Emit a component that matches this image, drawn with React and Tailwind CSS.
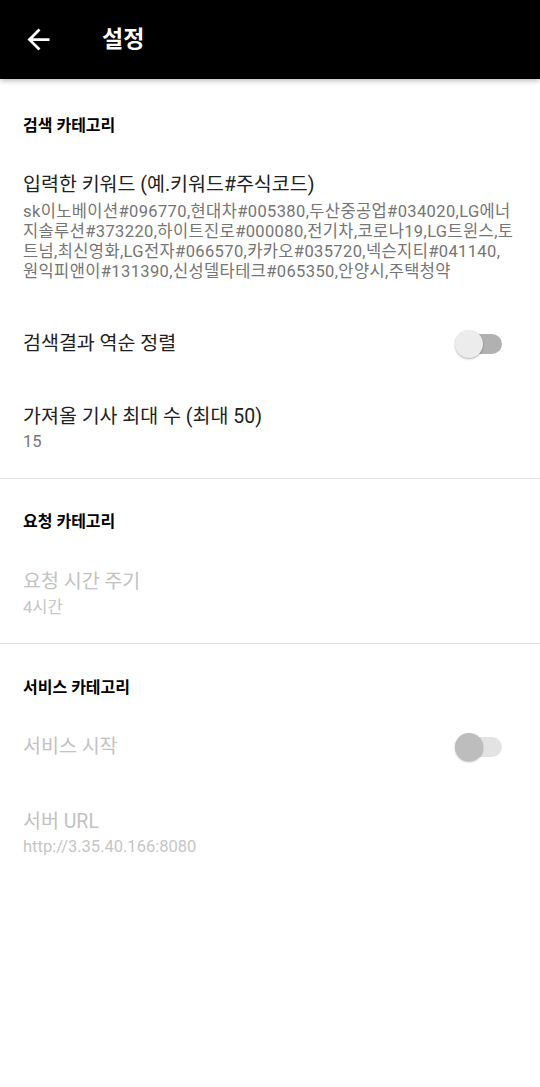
import React, { useState } from "react";

const FONT = "font-['Roboto','Noto_Sans_CJK_KR',sans-serif]";

const keywordLines = [
  "sk이노베이션#096770,현대차#005380,두산중공업#034020,LG에너",
  "지솔루션#373220,하이트진로#000080,전기차,코로나19,LG트윈스,토",
  "트넘,최신영화,LG전자#066570,카카오#035720,넥슨지티#041140,",
  "원익피앤이#131390,신성델타테크#065350,안양시,주택청약",
];

function Toggle({ checked, disabled, onChange }) {
  return (
    <button
      type="button"
      onClick={() => !disabled && onChange(!checked)}
      className="relative w-[47px] h-[30px] shrink-0"
    >
      <span
        className={`absolute right-0 top-[5px] w-[38px] h-[20px] rounded-full ${
          disabled ? "bg-[#e3e3e3]" : "bg-[#b1b1b1]"
        }`}
      />
      <span
        className={`absolute left-0 top-[1px] w-[28px] h-[28px] rounded-full shadow-[0_1px_2px_rgba(0,0,0,0.3)] ${
          disabled ? "bg-[#bdbdbd]" : "bg-[#ececec]"
        }`}
      />
    </button>
  );
}

function Heading({ children, className }) {
  return (
    <div className={`px-[23px] text-[16px] leading-5 font-bold text-black ${className}`}>
      {children}
    </div>
  );
}

const App = () => {
  const [reverse, setReverse] = useState(false);

  return (
    <div className={`min-h-screen bg-white ${FONT}`}>
      <header className="h-[79px] bg-black flex items-center shadow-[0_2px_5px_rgba(0,0,0,0.25)] relative">
        <svg
          viewBox="0 0 24 24"
          className="ml-[22px] w-[33px] h-[33px] fill-white"
        >
          <path d="M20 11H7.83l5.59-5.59L12 4l-8 8 8 8 1.41-1.41L7.83 13H20v-2z" />
        </svg>
        <h1 className="ml-[47px] text-[23px] font-bold text-white leading-none">설정</h1>
      </header>

      {/* 검색 카테고리 */}
      <Heading className="pt-[37px]">검색 카테고리</Heading>

      <div className="px-[23px] pt-[35px]">
        <div className="text-[19.5px] leading-[28px] text-[#212121]">
          입력한 키워드 (예.키워드#주식코드)
        </div>
        <div className="mt-[3px] text-[16.5px] leading-5 tracking-[0.38px] text-[#757575]">
          {keywordLines.map((line) => (
            <div key={line} className="whitespace-nowrap">
              {line}
            </div>
          ))}
        </div>
      </div>

      <div className="px-[23px] pr-[38px] pt-[47px] flex items-center justify-between">
        <div className="text-[19.5px] leading-[28px] text-[#212121]">검색결과 역순 정렬</div>
        <Toggle checked={reverse} onChange={setReverse} />
      </div>

      <div className="px-[23px] pt-[44px]">
        <div className="text-[19.5px] leading-[28px] text-[#212121]">
          가져올 기사 최대 수 (최대 50)
        </div>
        <div className="mt-[1px] text-[16.5px] leading-5 text-[#757575]">15</div>
      </div>

      <div className="mt-[26px] h-px bg-[#e0e0e0]" />

      {/* 요청 카테고리 */}
      <Heading className="pt-[33px]">요청 카테고리</Heading>

      <div className="px-[23px] pt-[36px]">
        <div className="text-[19.5px] leading-[28px] text-[#c2c2c2]">요청 시간 주기</div>
        <div className="mt-[2px] text-[16.5px] leading-5 text-[#c6c6c6]">4시간</div>
      </div>

      <div className="mt-[25px] h-px bg-[#e0e0e0]" />

      {/* 서비스 카테고리 */}
      <Heading className="pt-[34px]">서비스 카테고리</Heading>

      <div className="px-[23px] pr-[38px] pt-[34px] flex items-center justify-between">
        <div className="text-[19.5px] leading-[28px] text-[#c2c2c2]">서비스 시작</div>
        <Toggle checked={false} disabled onChange={() => {}} />
      </div>

      <div className="px-[23px] pt-[46px]">
        <div className="text-[19.5px] leading-[28px] text-[#c2c2c2]">서버 URL</div>
        <div className="mt-[1px] text-[16.5px] leading-5 text-[#c6c6c6]">
          http://3.35.40.166:8080
        </div>
      </div>
    </div>
  );
};

export default App;
